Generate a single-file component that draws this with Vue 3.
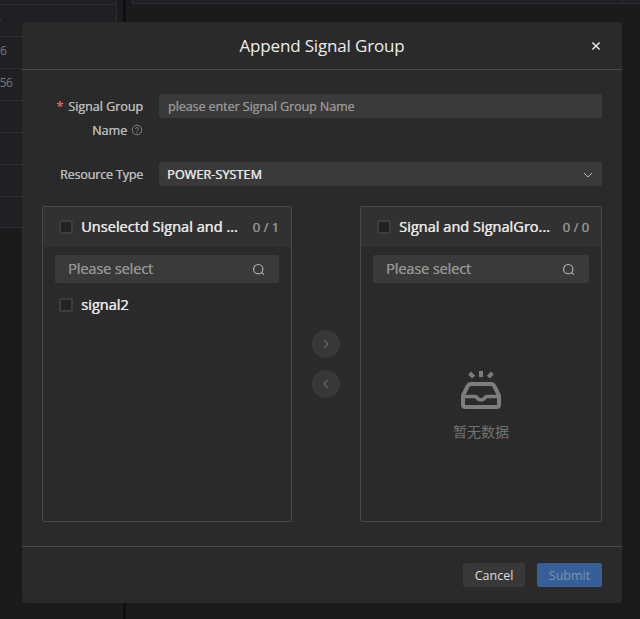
<script setup>
import { ref } from 'vue'

const rows = ['', '-', '6', ':56', '', '', '', '']
const name = ref('')
const panels = [
  { key: 'source', title: 'Unselectd Signal and ...', count: '0 / 1', items: ['signal2'] },
  { key: 'target', title: 'Signal and SignalGro...', count: '0 / 0', items: [] },
]
</script>

<template>
  <div class="page">
    <div class="backdrop">
      <div class="table">
        <div v-for="(row, i) in rows" :key="i" class="row" :class="{ clipped: row.length > 1 || row === '-' }">{{ row }}</div>
      </div>
      <div class="divider"></div>
      <div class="side"><i></i></div>
    </div>

    <section class="dialog">
      <header class="head">
        <h1>Append Signal Group</h1>
        <svg class="close" viewBox="0 0 10 10"><path d="M1.4 1.4 8.6 8.6M8.6 1.4 1.4 8.6" /></svg>
      </header>

      <main class="body">
        <div class="field first">
          <div class="label">
            <div><span class="star">*</span><span>Signal Group</span></div>
            <div>
              <span>Name</span>
              <svg class="help" viewBox="0 0 12 12"><circle cx="6" cy="6" r="4.8" /><path d="M4.6 5a1.4 1.4 0 1 1 2 1.2Q6 6.5 6 7.2M6 8v.9" /></svg>
            </div>
          </div>
          <input v-model="name" class="control" placeholder="please enter Signal Group Name" />
        </div>

        <div class="field">
          <div class="label"><div><span class="type">Resource Type</span></div></div>
          <div class="control select">
            <span>POWER-SYSTEM</span>
            <svg viewBox="0 0 10 6"><path d="M.8.8 5 5 9.2.8" /></svg>
          </div>
        </div>

        <div class="transfer">
          <template v-for="(panel, i) in panels" :key="panel.key">
            <div v-if="i === 1" class="moves">
              <button><svg viewBox="0 0 6 10"><path d="M1 .8 5.2 5 1 9.2" /></svg></button>
              <button><svg viewBox="0 0 6 10"><path d="M5 .8.8 5 5 9.2" /></svg></button>
            </div>
            <div class="panel" :class="panel.key">
              <div class="panel-head">
                <span class="box"></span>
                <span class="title">{{ panel.title }}</span>
                <span class="count">{{ panel.count }}</span>
              </div>
              <div class="search">
                <span>Please select</span>
                <svg viewBox="0 0 14 14"><circle cx="6.7" cy="6.6" r="5" /><path d="m10.3 10.2 2.4 2.4" /></svg>
              </div>
              <div v-for="item in panel.items" :key="item" class="item">
                <span class="box"></span><span class="name">{{ item }}</span>
              </div>
              <div v-if="!panel.items.length" class="empty">
                <svg viewBox="0 0 40 38">
                  <path class="tray" d="M9.500 13H30.500Q32.300 13 33.200 14.800L38 24.500V33.500Q38 36 35.500 36H4.500Q2 36 2 33.500V24.500L6.800 14.800Q7.700 13 9.500 13Z" />
                  <path class="lip" d="M2 25.500H14.500C16 25.500 16.200 29 20 29S24 25.500 25.500 25.500H38" />
                  <path class="rays" d="M20 0V6M8.600 2 12.600 6.200M31.400 2 27.400 6.200" />
                </svg>
                <p>暂无数据</p>
              </div>
            </div>
          </template>
        </div>
      </main>

      <footer class="foot">
        <button class="cancel">Cancel</button>
        <button class="submit" disabled>Submit</button>
      </footer>
    </section>
  </div>
</template>

<style>
body {
  background: #1b1b1d;
}
</style>

<style scoped>
* {
  box-sizing: border-box;
}
.page {
  display: grid;
  width: 640px;
  height: 619px;
  overflow: hidden;
  background: #1b1b1d;
  font-family: "Open Sans", "Noto Sans", "Noto Sans CJK SC", sans-serif;
  white-space: nowrap;
}
.backdrop,
.dialog {
  grid-area: 1 / 1;
}
.backdrop {
  display: flex;
  height: 619px;
}
.table {
  width: 117px;
  height: 228px;
  background: #1f2023;
  border-right: 1px solid #2d2e31;
}
.row {
  height: 32px;
  border-bottom: 1px solid #2d2e31;
  color: #77787a;
  font-size: 12px;
  line-height: 27px;
  letter-spacing: -0.5px;
}
.clipped {
  text-indent: -3px;
}
.row:first-child {
  height: 5px;
}
.row:last-child {
  height: 31px;
}
.divider {
  width: 3px;
  height: 619px;
  margin: 0 6px;
  background: #0f0f10;
}
.side {
  flex: 1;
  height: 4px;
  border: solid #2d2e31;
  border-width: 0 0 1px 1px;
  background: #1f2023;
}
.side i {
  display: block;
  width: 490px;
  height: 3px;
  border-right: 1px solid #2d2e31;
}
.dialog {
  display: flex;
  flex-direction: column;
  width: 600px;
  height: 581px;
  margin: 22px 0 0 22px;
  border-radius: 4px;
  background: #2a2a2a;
  z-index: 1;
}
.head {
  display: flex;
  align-items: center;
  height: 48px;
  padding: 0 21px 0 31px;
  border-bottom: 1px solid #4a4a4a;
}
h1 {
  flex: 1;
  margin: 0;
  color: #ededed;
  font-size: 17px;
  font-weight: 400;
  line-height: 24px;
  letter-spacing: -0.16px;
  text-align: center;
}
svg {
  flex: none;
  fill: none;
  stroke: #b9b9b9;
}
.close {
  width: 10px;
  height: 10px;
  stroke: #eee;
  stroke-width: 1.4;
}
.body {
  flex: 1;
  padding: 24px 20px 0;
}
.field {
  display: flex;
  height: 45px;
}
.first {
  height: 68px;
}
.label {
  width: 117px;
  padding-right: 16px;
  color: #b8b8b8;
  font-size: 12.5px;
  line-height: 25px;
  text-shadow: 0.4px 0 currentColor;
}
.label > div {
  display: flex;
  justify-content: flex-end;
  align-items: center;
  height: 24px;
}
.type {
  letter-spacing: -0.15px;
}
.star {
  margin-right: 5px;
  color: #e46060;
}
.help {
  width: 12px;
  height: 12px;
  margin-left: 4px;
  stroke: #8a8a8a;
  stroke-width: 0.9;
}
.control {
  flex: 1;
  width: 0;
  height: 24px;
  padding: 1px 9px 0;
  border: 0;
  border-radius: 2px;
  outline: 0;
  background: #3a3a3a;
  color: #e5e5e5;
  font: 400 12.5px/23px "Open Sans", sans-serif;
  letter-spacing: -0.07px;
  text-shadow: 0.3px 0 currentColor;
}
.control::placeholder {
  color: #949494;
  opacity: 1;
}
.select {
  display: flex;
  align-items: center;
  justify-content: space-between;
  padding-left: 8px;
  letter-spacing: 0.13px;
  text-shadow: 0.5px 0 currentColor;
}
.select svg {
  width: 10px;
  height: 6px;
}
.transfer {
  display: flex;
}
.panel {
  display: flex;
  flex-direction: column;
  width: 250px;
  height: 316px;
  border: 1px solid #494949;
  border-radius: 2px;
  margin-top: -1px;
}
.target {
  width: 242px;
}
.panel-head {
  display: flex;
  align-items: center;
  height: 40px;
  padding: 0 12px 0 16px;
  background: #313131;
}
.box {
  flex: none;
  width: 14px;
  height: 14px;
  margin-right: 8px;
  border: 2px solid #3d3d3d;
  border-radius: 2px;
  background: #222;
}
.title,
.name {
  padding-bottom: 2px;
  color: #e5e5e5;
  font-size: 14.5px;
  letter-spacing: 0.03px;
  text-shadow: 0.5px 0 currentColor;
}
.count {
  margin-left: auto;
  color: #929292;
  font-size: 13px;
  text-shadow: 0.4px 0 currentColor;
}
.search {
  display: flex;
  align-items: center;
  justify-content: space-between;
  height: 28px;
  margin: 8px 12px 0;
  padding: 0 13px;
  border-radius: 2px;
  background: #3a3a3a;
  color: #949494;
  font-size: 14.5px;
  letter-spacing: -0.1px;
  text-shadow: 0.3px 0 currentColor;
}
.search span {
  padding-bottom: 2px;
}
.search svg {
  width: 13px;
  height: 13px;
  margin-right: 1px;
  stroke-width: 1.2;
}
.item {
  display: flex;
  align-items: center;
  height: 28px;
  margin-top: 8px;
  padding-left: 16px;
}
.moves {
  display: flex;
  flex-direction: column;
  gap: 12px;
  width: 68px;
  padding: 123px 20px 0;
}
.moves button {
  display: grid;
  place-items: center;
  width: 28px;
  height: 28px;
  padding: 0;
  border: 0;
  border-radius: 50%;
  background: #383838;
}
.moves svg {
  width: 6px;
  height: 10px;
  stroke: #858585;
}
.empty {
  display: flex;
  flex-direction: column;
  align-items: center;
  padding-top: 88px;
}
.empty svg {
  width: 40px;
  height: 38px;
  stroke: #7d7d7d;
  stroke-width: 4;
}
.empty .lip {
  stroke-width: 3.6;
}
.empty p {
  margin: 12px 0 0;
  color: #737373;
  font-family: "Noto Sans CJK SC", sans-serif;
  font-size: 14px;
  line-height: 20px;
}
.foot {
  display: flex;
  justify-content: flex-end;
  gap: 12px;
  height: 57px;
  padding: 16px 20px 0;
  border-top: 1px solid #4a4a4a;
}
.foot button {
  width: 62px;
  height: 24px;
  padding: 2px 0 0;
  border: 0;
  border-radius: 2px;
  background: #383838;
  color: #dedede;
  font: 400 12.5px/22px "Open Sans", sans-serif;
}
.foot .submit {
  width: 65px;
  background: #365f98;
  color: #7e92ae;
}
</style>
